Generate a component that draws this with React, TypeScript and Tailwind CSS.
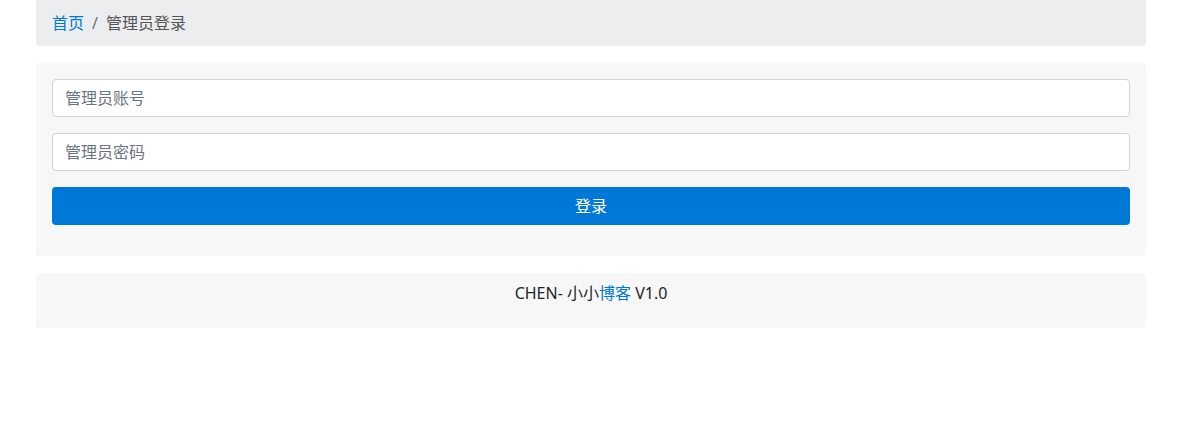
import React from 'react';

export default function App() {
  return (
    <div
      className="min-h-screen bg-white text-[#212529]"
      style={{ fontFamily: '"Noto Sans", "Noto Sans CJK SC", sans-serif' }}
    >
      <div className="ml-9 w-[1110px]">
        {/* Breadcrumb */}
        <nav className="flex h-[46px] items-center gap-2 rounded-b bg-[#ecedef] px-4 text-base">
          <a href="#" className="text-[#0078d7]">首页</a>
          <span className="text-[#6c757d]">/</span>
          <span className="text-[#555]">管理员登录</span>
        </nav>

        {/* Login form */}
        <div className="mt-[17px] rounded bg-[#f7f7f7] px-4 pt-4 pb-[31px]">
          <form className="flex flex-col gap-4" onSubmit={(e) => e.preventDefault()}>
            <input
              type="text"
              placeholder="管理员账号"
              className="h-[38px] w-full rounded border border-[#ced4da] bg-white px-3 text-base placeholder-[#6c757d] outline-none"
            />
            <input
              type="password"
              placeholder="管理员密码"
              className="h-[38px] w-full rounded border border-[#ced4da] bg-white px-3 text-base placeholder-[#6c757d] outline-none"
            />
            <button type="submit" className="h-[38px] w-full rounded bg-[#0078d7] text-base text-white">
              登录
            </button>
          </form>
        </div>

        {/* Footer */}
        <footer className="mt-[17px] h-[55px] rounded bg-[#f7f7f7] pt-2 text-center text-base">
          CHEN- 小小<a href="#" className="text-[#0078d7]">博客</a> V1.0
        </footer>
      </div>
    </div>
  );
}
